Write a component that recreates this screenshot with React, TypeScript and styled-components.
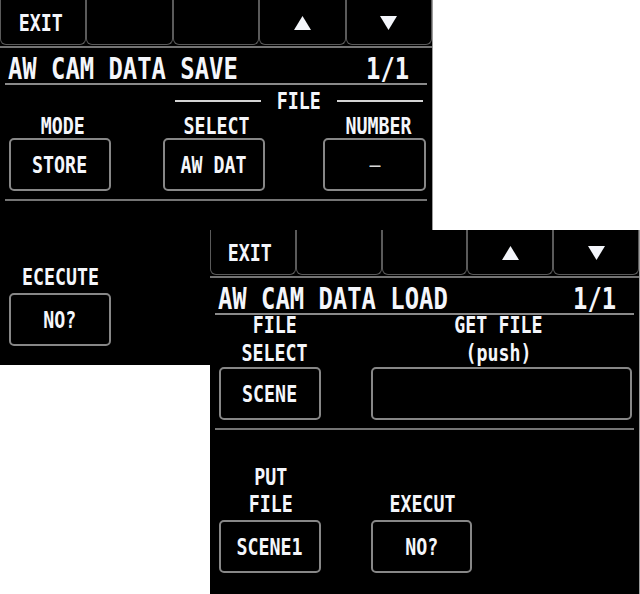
import React from "react";
import styled, { createGlobalStyle } from "styled-components";

const GlobalStyle = createGlobalStyle`
  html, body { margin: 0; padding: 0; background: #ffffff; }
  #root { width: 640px; height: 594px; }
`;

const Desktop = styled.main`
  position: relative;
  width: 640px;
  height: 594px;
  overflow: hidden;
  background: #ffffff;
  font-family: "DejaVu Sans Mono", "Liberation Mono", monospace;
`;

const Screen = styled.section<{ $left: number; $top: number; $width: number; $height: number }>`
  position: absolute;
  left: ${(p) => p.$left}px;
  top: ${(p) => p.$top}px;
  width: ${(p) => p.$width}px;
  height: ${(p) => p.$height}px;
  box-sizing: border-box;
  display: flex;
  flex-direction: column;
  background: #000000;
  border-right: 1px solid #9c9c9c;
  overflow: hidden;
`;

const Glyphs = styled.span<{ $title?: boolean; $origin?: string; $light?: boolean }>`
  display: inline-block;
  font-weight: ${(p) => (p.$light ? 400 : 700)};
  font-size: ${(p) => (p.$title ? 30 : 23)}px;
  line-height: ${(p) => (p.$title ? 28 : 20)}px;
  color: ${(p) => (p.$light ? "#d8d8d8" : "#f4f6fb")};
  white-space: pre;
  transform: scaleX(0.795);
  transform-origin: ${(p) => p.$origin ?? "center"};
`;

const Toolbar = styled.nav`
  flex: none;
  display: grid;
  grid-template-columns: repeat(5, 1fr);
  height: 48px;
  box-sizing: border-box;
  padding-bottom: 1px;
  border-bottom: 2px solid #737373;
`;

const ToolKey = styled.div<{ $nudge?: number }>`
  display: flex;
  align-items: center;
  justify-content: center;
  box-sizing: border-box;
  padding-top: 2px;
  padding-right: ${(p) => p.$nudge ?? 0}px;
  border: 1px solid #5a5a5a;
  border-top: none;
  border-radius: 0 0 6px 6px;
`;

const TitleBar = styled.header`
  flex: none;
  display: flex;
  justify-content: space-between;
  align-items: flex-end;
  margin: 0 5px;
  padding: 7px 18px 0 3px;
  border-bottom: 2px solid #8a8a8a;
`;

const FieldGrid = styled.div<{ $cols: string; $padTop: number }>`
  flex: none;
  display: grid;
  grid-template-columns: ${(p) => p.$cols};
  align-items: end;
  row-gap: 5px;
  padding: ${(p) => p.$padTop}px 0 0 9px;
`;

const GroupHead = styled.div<{ $span: string }>`
  grid-column: ${(p) => p.$span};
  display: flex;
  align-items: center;
  gap: 10px;
  height: 20px;
  padding: 0 3px 0 12px;
`;

const Rule = styled.span`
  flex: 1;
  height: 2px;
  background: #d4d4d4;
`;

const Field = styled.div<{ $gap: number }>`
  justify-self: start;
  display: flex;
  flex-direction: column;
  align-items: stretch;
  gap: ${(p) => p.$gap}px;
`;

const Caption = styled.div<{ $shift?: number; $lineGap?: number }>`
  display: flex;
  flex-direction: column;
  align-items: center;
  gap: ${(p) => p.$lineGap ?? 0}px;
  padding-left: ${(p) => Math.max(0, (p.$shift ?? 0) * 2)}px;
  padding-right: ${(p) => Math.max(0, -(p.$shift ?? 0) * 2)}px;
`;

const Key = styled.div<{ $w: number }>`
  width: ${(p) => p.$w}px;
  height: 53px;
  box-sizing: border-box;
  display: flex;
  align-items: center;
  justify-content: center;
  border: 2px solid #878787;
  border-radius: 5px;
`;

const Divider = styled.hr<{ $top: number }>`
  flex: none;
  margin: ${(p) => p.$top}px 5px 0 5px;
  border: 0;
  height: 2px;
  background: #747474;
`;

const Arrow = ({ down }: { down?: boolean }) => (
  <svg width="17" height="14" viewBox="0 0 17 14" aria-hidden="true">
    <polygon points={down ? "0,0 17,0 8.5,14" : "8.5,0 17,14 0,14"} fill="#f4f6fb" />
  </svg>
);

const TopKeys = () => (
  <Toolbar>
    <ToolKey $nudge={6}>
      <Glyphs>EXIT</Glyphs>
    </ToolKey>
    <ToolKey />
    <ToolKey />
    <ToolKey>
      <Arrow />
    </ToolKey>
    <ToolKey>
      <Arrow down />
    </ToolKey>
  </Toolbar>
);

const Title = ({ text }: { text: string }) => (
  <TitleBar>
    <Glyphs $title $origin="left">{text}</Glyphs>
    <Glyphs $title $origin="right">1/1</Glyphs>
  </TitleBar>
);

export default function App() {
  return (
    <>
      <GlobalStyle />
      <Desktop>
        <Screen $left={0} $top={0} $width={433} $height={365}>
          <TopKeys />
          <Title text="AW CAM DATA SAVE" />
          <FieldGrid $cols="154px 160px 103px" $padTop={6}>
            <GroupHead $span="2 / 4">
              <Rule />
              <Glyphs>FILE</Glyphs>
              <Rule />
            </GroupHead>
            <Field $gap={2}>
              <Caption $shift={3}>
                <Glyphs>MODE</Glyphs>
              </Caption>
              <Key $w={102}>
                <Glyphs>STORE</Glyphs>
              </Key>
            </Field>
            <Field $gap={2}>
              <Caption $shift={3}>
                <Glyphs>SELECT</Glyphs>
              </Caption>
              <Key $w={102}>
                <Glyphs>AW DAT</Glyphs>
              </Key>
            </Field>
            <Field $gap={2}>
              <Caption $shift={4}>
                <Glyphs>NUMBER</Glyphs>
              </Caption>
              <Key $w={103}>
                <Glyphs $light>–</Glyphs>
              </Key>
            </Field>
          </FieldGrid>
          <Divider $top={8} />
          <FieldGrid $cols="154px" $padTop={66}>
            <Field $gap={6}>
              <Caption>
                <Glyphs>ECECUTE</Glyphs>
              </Caption>
              <Key $w={102}>
                <Glyphs>NO?</Glyphs>
              </Key>
            </Field>
          </FieldGrid>
        </Screen>

        <Screen $left={210} $top={230} $width={430} $height={364}>
          <TopKeys />
          <Title text="AW CAM DATA LOAD" />
          <FieldGrid $cols="152px 261px" $padTop={0}>
            <Field $gap={4}>
              <Caption $shift={5} $lineGap={8}>
                <Glyphs>FILE</Glyphs>
                <Glyphs>SELECT</Glyphs>
              </Caption>
              <Key $w={102}>
                <Glyphs>SCENE</Glyphs>
              </Key>
            </Field>
            <Field $gap={4}>
              <Caption $shift={-3} $lineGap={8}>
                <Glyphs>GET FILE</Glyphs>
                <Glyphs>(push)</Glyphs>
              </Caption>
              <Key $w={261} />
            </Field>
          </FieldGrid>
          <Divider $top={8} />
          <FieldGrid $cols="152px 101px" $padTop={37}>
            <Field $gap={6}>
              <Caption $shift={1} $lineGap={7}>
                <Glyphs>PUT</Glyphs>
                <Glyphs>FILE</Glyphs>
              </Caption>
              <Key $w={102}>
                <Glyphs>SCENE1</Glyphs>
              </Key>
            </Field>
            <Field $gap={6}>
              <Caption $shift={1}>
                <Glyphs>EXECUT</Glyphs>
              </Caption>
              <Key $w={101}>
                <Glyphs>NO?</Glyphs>
              </Key>
            </Field>
          </FieldGrid>
        </Screen>
      </Desktop>
    </>
  );
}
